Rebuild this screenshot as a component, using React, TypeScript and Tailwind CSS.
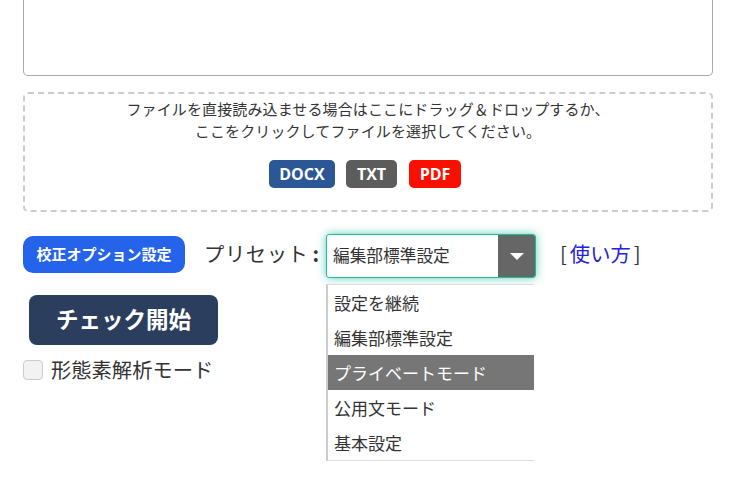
const font = "font-['Noto_Sans_CJK_JP','Noto_Sans',sans-serif]";

const badges = [
  { label: "DOCX", bg: "bg-[#2b5797]", width: "w-[66px]" },
  { label: "TXT", bg: "bg-[#5c5c5c]", width: "w-[51px]" },
  { label: "PDF", bg: "bg-[#fa0f00] ml-[1px]", width: "w-[52px]" },
];

const presets = ["設定を継続", "編集部標準設定", "プライベートモード", "公用文モード", "基本設定"];

export default function App() {
  return (
    <div className={`${font} w-[742px] h-[498px] bg-white overflow-hidden px-[23px] text-[#333]`}>
      <textarea className="block w-[690px] h-[76px] bg-white border border-t-0 border-[#aaa] rounded-b-[5px] resize-none outline-none" />

      <div className="mt-4 h-[120px] w-[690px] border-2 border-dashed border-[#ccc] rounded-[5px] flex flex-col items-center pt-[4px]">
        <p className="text-[15px] leading-[22px] tracking-[0.12px] text-center text-[#333]">
          ファイルを直接読み込ませる場合はここにドラッグ＆ドロップするか、
          <br />
          ここをクリックしてファイルを選択してください。
        </p>
        <div className="flex gap-[11px] mt-[18px] mr-[6px]">
          {badges.map((b) => (
            <span
              key={b.label}
              className={`${b.bg} ${b.width} h-[28px] rounded-[5px] text-white font-['Open_Sans',sans-serif] text-[16px] font-bold flex items-center justify-center`}
            >
              {b.label}
            </span>
          ))}
        </div>
      </div>

      <div className="flex items-start mt-[23px]">
        <button className="w-[162px] h-[37px] mt-[1px] rounded-[10px] bg-[#2563eb] text-white text-[15px] font-bold flex items-center justify-center">
          校正オプション設定
        </button>
        <span className="ml-[19px] w-[122px] text-[20.3px] leading-[37px] tracking-[0.6px] text-[#333] whitespace-nowrap">
          プリセット<span className="ml-[4px] font-bold">:</span>
        </span>
        <div className="relative w-[210px] -mt-[1px]">
          <div className="h-[44px] flex items-stretch rounded-[3px] border border-[#1abc9c] bg-white shadow-[0_0_10px_rgba(26,188,156,0.7)] overflow-hidden">
            <span className="flex-1 pl-[6px] text-[16.7px] leading-[40px] text-[#333]">編集部標準設定</span>
            <span className="w-[37px] bg-[#666] flex items-center justify-center">
              <svg width="14" height="7" viewBox="0 0 14 7">
                <path d="M0 0h14L7 7z" fill="#fff" />
              </svg>
            </span>
          </div>
          <ul className="absolute left-0 top-[50px] w-[208px] bg-white border-l-2 border-t border-b border-[#ddd] border-l-[#ccc]">
            {presets.map((p, i) => (
              <li
                key={p}
                className={`h-[35px] pl-[6px] text-[17px] leading-[35px] ${i === 2 ? "bg-[#767676] text-white" : "text-[#333]"}`}
              >
                {p}
              </li>
            ))}
          </ul>
        </div>
        <span className="ml-[24px] text-[20.3px] leading-[37px] text-[#333] whitespace-nowrap">
          [<span className="ml-[3px] mr-[3px] text-[#2222dd]">使い方</span>]
        </span>
      </div>

      <button className="block ml-[6px] mt-[17px] w-[189px] h-[50px] pb-[2px] rounded-[8px] bg-[#2c3e5d] text-white text-[22.5px] font-bold">
        チェック開始
      </button>

      <label className="flex items-center mt-[15px] h-[20px]">
        <span className="w-[20px] h-[20px] rounded-[4px] bg-[#f2f2f2] border border-[#ccc]" />
        <span className="ml-[8px] -mt-[3px] text-[20.3px] leading-[20px] text-[#333]">形態素解析モード</span>
      </label>
    </div>
  );
}
